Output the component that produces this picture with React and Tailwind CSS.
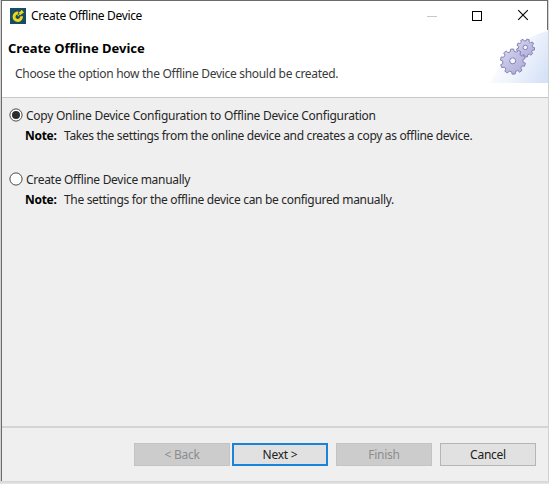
function AppIcon() {
  return (
    <svg width="16" height="16" viewBox="0 0 16 16" className="shrink-0">
      <rect width="16" height="16" fill="#194a66" />
      <path d="M8.2 5.1A3.7 3.7 0 1 0 11.4 8.2" fill="none" stroke="#ecd816" strokeWidth="3" />
      <path d="M7.4 7.8 9.6 5.6 8.6 4.6 10.4 3.6 11.6 1.8 14 4.4 11.6 6 10.8 7.2 9.8 6.4 8.2 8.6Z" fill="#ecd816" />
    </svg>
  );
}

function gearPath(cx, cy, outer, inner, teeth, turn) {
  const step = (Math.PI * 2) / teeth;
  const at = (r, a) => `${(cx + r * Math.cos(a)).toFixed(2)} ${(cy + r * Math.sin(a)).toFixed(2)}`;
  let d = "";
  for (let i = 0; i < teeth; i++) {
    const a = i * step + turn;
    d += `${i ? "L" : "M"}${at(inner, a - step * 0.3)}L${at(outer, a - step * 0.2)}L${at(outer, a + step * 0.2)}L${at(inner, a + step * 0.3)}`;
  }
  return d + "Z";
}

function Gears() {
  return (
    <svg width="57" height="54" viewBox="0 0 57 54" className="block">
      <defs>
        <linearGradient id="sweep" x1="0" y1="0.3" x2="1" y2="0.8">
          <stop offset="0.1" stopColor="#ffffff" />
          <stop offset="0.55" stopColor="#eef3fc" />
          <stop offset="1" stopColor="#d6e2f7" />
        </linearGradient>
        <linearGradient id="metal" x1="0" y1="0" x2="1" y2="1">
          <stop offset="0" stopColor="#d6d6f0" />
          <stop offset="1" stopColor="#acaad6" />
        </linearGradient>
      </defs>
      <path d="M57 1C34 6 10 26 0 53H57Z" fill="url(#sweep)" />
      <g fill="url(#metal)" stroke="#8583b8" strokeWidth="1" strokeLinejoin="round">
        <path d={gearPath(34.6, 18, 9, 7.2, 9, 0.1)} />
        <path d={gearPath(21.9, 31.6, 12.6, 10.2, 10, 0.25)} />
        <circle cx="34.3" cy="17.4" r="2.3" fill="#eef1fb" />
        <circle cx="21.7" cy="30.8" r="3" fill="#f4f6fd" />
      </g>
    </svg>
  );
}

function Radio({ checked }) {
  return (
    <svg width="14" height="14" viewBox="0 0 14 14" className="-mt-[2px] shrink-0">
      <circle cx="7" cy="7" r="6.1" fill="#fff" stroke="#4a4a4a" />
      {checked && <circle cx="7" cy="7" r="4" fill="#2d2d2d" />}
    </svg>
  );
}

function Option({ checked, label, note, labelClass, noteClass }) {
  return (
    <div className="h-16 text-[#262626]">
      <div className="flex h-5 items-center gap-[3px]">
        <Radio checked={checked} />
        <span className={labelClass}>{label}</span>
      </div>
      <div className="flex h-5 items-center pl-4">
        <b className="w-[39px] tracking-[-0.3px] text-black">Note:</b>
        <span className={noteClass}>{note}</span>
      </div>
    </div>
  );
}

export default function App() {
  return (
    <div className="h-[484px] w-[549px] overflow-hidden bg-linear-to-b from-[#d2d2d2] from-[99.3%] to-[#e6e6e6] pl-px pb-[3px] font-['Noto_Sans','Open_Sans',sans-serif] text-[12px] whitespace-nowrap">
      <div className="flex h-[481px] w-[547px] flex-col border-l border-t border-[#6b6b6b] bg-[#efefef]">
        <header className="flex h-[96px] shrink-0 bg-white">
          <div className="flex w-[489px] flex-col">
            <div className="flex h-[30px] items-center pl-2">
              <AppIcon />
              <span className="pl-[5px] tracking-[-0.34px] text-black">Create Offline Device</span>
              <svg width="57" height="12" viewBox="0 0 57 12" fill="none" shapeRendering="crispEdges" className="-mt-px ml-auto mr-[9px]">
                <path d="M2 6.5H12" stroke="#c8c8c8" />
                <rect x="47.5" y="1.5" width="9" height="9" stroke="#000" />
              </svg>
            </div>
            <h1 className="h-9 pl-[6px] pt-[7px] text-[13px] leading-5 font-bold tracking-[0px] text-black">Create Offline Device</h1>
            <p className="-mt-[2px] pl-[13px] tracking-[-0.3px] text-[#3a3a3a]">Choose the option how the Offline Device should be created.</p>
          </div>
          <div className="flex w-[57px] flex-col">
            <div className="flex h-[29px] border-r border-[#6b6b6b] pl-[26px] pt-[8px]">
              <svg width="12" height="12" viewBox="0 0 12 12" stroke="#000" strokeWidth="1.1">
                <path d="M1.2 1.2 10.8 10.8M10.8 1.2 1.2 10.8" />
              </svg>
            </div>
            <Gears />
          </div>
        </header>
        <main className="grow border-t border-[#c9c9c9] pl-[7px] pt-2">
          <Option
            checked
            label="Copy Online Device Configuration to Offline Device Configuration"
            note="Takes the settings from the online device and creates a copy as offline device."
            labelClass="tracking-[-0.26px]"
            noteClass="tracking-[-0.33px]"
          />
          <Option
            label="Create Offline Device manually"
            note="The settings for the offline device can be configured manually."
            labelClass="tracking-[-0.3px]"
            noteClass="tracking-[-0.32px]"
          />
        </main>
        <footer className="flex h-[55px] shrink-0 border-t-2 border-[#d4d4d4] pl-[132px] pt-[15px] tracking-[-0.25px]">
          <button className="h-[23px] w-24 border border-[#c3c3c3] bg-[#cccccc] text-[#8c8c8c]">&lt; Back</button>
          <button className="ml-[2px] h-[23px] w-24 border-2 border-[#1883d7] bg-[#e1e1e1] text-[#202020]">Next &gt;</button>
          <button className="ml-2 h-[23px] w-24 border border-[#c3c3c3] bg-[#cccccc] text-[#8c8c8c]">Finish</button>
          <button className="ml-2 h-[23px] w-24 border border-[#b5b5b5] bg-[#e1e1e1] text-[#202020]">Cancel</button>
        </footer>
      </div>
    </div>
  );
}
